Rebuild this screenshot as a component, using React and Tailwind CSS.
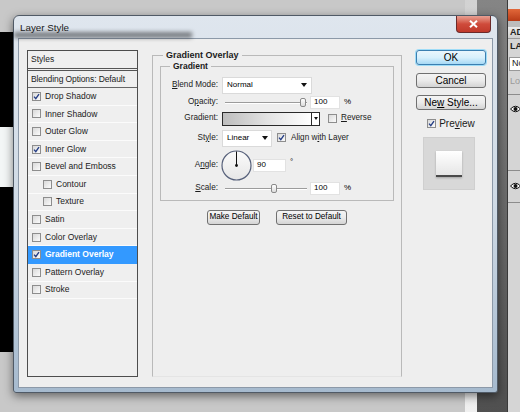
import React from "react";

const font = "font-['Liberation_Sans',Arial,sans-serif]";

const styleItems = [
  { label: "Drop Shadow", checked: true },
  { label: "Inner Shadow" },
  { label: "Outer Glow" },
  { label: "Inner Glow", checked: true },
  { label: "Bevel and Emboss" },
  { label: "Contour", sub: true },
  { label: "Texture", sub: true },
  { label: "Satin" },
  { label: "Color Overlay" },
  { label: "Gradient Overlay", checked: true, active: true },
  { label: "Pattern Overlay" },
  { label: "Stroke" },
];

function Check({ checked }) {
  return (
    <span className="flex h-[9px] w-[9px] shrink-0 items-center justify-center border border-[#8d8d8d] bg-linear-to-br from-[#d9d9d9] to-[#fbfbfb]">
      {checked && (
        <svg width="7" height="7" viewBox="0 0 7 7">
          <path d="M1 3.6 L2.8 5.6 L6 1.2" fill="none" stroke="#263f86" strokeWidth="1.4" />
        </svg>
      )}
    </span>
  );
}

function WinButton({ children, primary, className = "" }) {
  const skin = primary
    ? "border-[#3c7fb1] bg-linear-to-b from-[#eaf6fd] via-[#d9f0fc] to-[#a7d9f5] shadow-[0_0_0_1px_#9fdcf7]"
    : "border-[#707070] bg-linear-to-b from-[#f4f4f4] via-[#ebebeb] to-[#d4d4d4]";
  return (
    <div
      className={`flex items-center justify-center rounded-[3px] border text-black ${skin} ${className}`}
    >
      <span>{children}</span>
    </div>
  );
}

function Slider({ at }) {
  return (
    <div className="relative h-[11px] w-[82px]">
      <div className="absolute left-0 right-0 top-[5px] h-[2px] border-t border-[#9c9c9c] border-b border-b-white" />
      <div
        className="absolute top-[1px] h-[9px] w-[6px] rounded-[2px] border border-[#8a8a8a] bg-linear-to-b from-white to-[#dcdcdc]"
        style={{ left: at }}
      />
    </div>
  );
}

function NumBox({ value, className = "w-[30px]" }) {
  return (
    <div className={`flex h-[13px] items-center border border-[#e2e2e2] bg-white pl-[3px] text-[8px] text-black ${className}`}>
      {value}
    </div>
  );
}

function Arrow() {
  return (
    <svg width="6" height="4" viewBox="0 0 6 4">
      <path d="M0 0 H6 L3 4 Z" fill="#111" />
    </svg>
  );
}

function Row({ label, h, children }) {
  return (
    <div className="flex items-center gap-[4px]" style={{ height: h }}>
      <div className="w-[57px] shrink-0 text-right text-[8.2px] text-[#1b1b1b]">{label}</div>
      <div className="flex items-center">{children}</div>
    </div>
  );
}

function StylesList() {
  return (
    <div className="flex w-[111px] flex-col border border-[#4d4d4d] bg-[#efefef] text-[8.5px] text-[#1b1b1b]">
      <div className="flex h-[17px] items-center pl-[3px]">Styles</div>
      <div className="border-b-[3px] border-double border-[#555]" />
      <div className="flex h-[17px] items-center border-b border-[#666] pl-[3px] tracking-[-0.1px]">Blending Options: Default</div>
      {styleItems.map((it) => (
        <div
          key={it.label}
          className={`flex h-[17.6px] items-center gap-[4px] border-b ${
            it.active ? "border-[#3399ff] bg-[#3399ff] font-bold text-white" : "border-[#fbfbfb]"
          } ${it.sub ? "pl-[15px]" : "pl-[4px]"}`}
        >
          <Check checked={it.checked} />
          <span>{it.label}</span>
        </div>
      ))}
    </div>
  );
}

function GradientPanel() {
  return (
    <fieldset className="ml-[14px] flex w-[248px] flex-col border border-[#b9b9b9] border-b-[#e4e4e4] px-[7px]">
      <legend className="ml-[3px] px-[3px] text-[9px] font-bold leading-[11px] text-[#1b1b1b]">Gradient Overlay</legend>

      <fieldset className="w-[234px] border border-[#b9b9b9] pb-[5px]">
        <legend className="ml-[9px] px-[3px] text-[8.5px] font-bold leading-[11px] text-[#1b1b1b]">Gradient</legend>

        <div className="mt-[4px] flex flex-col">
          <Row label={<><u>B</u>lend Mode:</>} h={18}>
            <div className="flex h-[17px] w-[90px] items-center justify-between border border-[#dadada] bg-white pl-[4px] pr-[4px] text-[8px] text-black">
              Normal
              <Arrow />
            </div>
          </Row>
          <Row label={<>O<u>p</u>acity:</>} h={16}>
            <div className="ml-[3px]">
              <Slider at={75} />
            </div>
            <NumBox value="100" className="ml-[3px] w-[30px]" />
            <span className="ml-[4px] text-[8px]">%</span>
          </Row>
          <Row label="Gradient:" h={17}>
            <div className="flex h-[14px] w-[98px] border border-[#2a2a2a]">
              <div className="flex-1 bg-linear-to-r from-[#bdbdbd] via-[#e3e3e3] to-white" />
              <div className="flex w-[8px] items-center justify-center border-l border-[#2a2a2a] bg-white">
                <svg width="4" height="3" viewBox="0 0 4 3">
                  <path d="M0 0 H4 L2 3 Z" fill="#111" />
                </svg>
              </div>
            </div>
            <div className="ml-[8px] flex items-center gap-[4px] text-[8.2px] text-[#1b1b1b]">
              <Check />
              <span><u>R</u>everse</span>
            </div>
          </Row>
          <Row label={<>St<u>y</u>le:</>} h={22}>
            <div className="flex h-[17px] w-[50px] items-center justify-between border border-[#dadada] bg-white pl-[4px] pr-[3px] text-[8px] text-black">
              Linear
              <Arrow />
            </div>
            <div className="ml-[5px] flex items-center gap-[5px] text-[8.2px] text-[#1b1b1b]">
              <Check checked />
              <span>Align w<u>i</u>th Layer</span>
            </div>
          </Row>
          <Row label={<>A<u>n</u>gle:</>} h={32}>
            <svg width="31" height="31" viewBox="0 0 31 31" className="-ml-[1px]">
              <defs>
                <linearGradient id="dial" x1="0" y1="0" x2="0" y2="1">
                  <stop offset="0" stopColor="#fbfbfb" />
                  <stop offset="1" stopColor="#e6e6e6" />
                </linearGradient>
              </defs>
              <circle cx="15.5" cy="15.5" r="14.5" fill="url(#dial)" stroke="#56607a" strokeWidth="1.2" />
              <line x1="15.5" y1="15.5" x2="15.5" y2="1.5" stroke="#111" strokeWidth="1" />
              <circle cx="15.5" cy="15.5" r="1.4" fill="#111" />
            </svg>
            <NumBox value="90" className="ml-[1px] w-[33px]" />
            <span className="ml-[4px] -mt-[7px] text-[8px]">°</span>
          </Row>
          <Row label={<><u>S</u>cale:</>} h={14}>
            <div className="ml-[3px]">
              <Slider at={46} />
            </div>
            <NumBox value="100" className="ml-[3px] w-[30px]" />
            <span className="ml-[4px] text-[8px]">%</span>
          </Row>
        </div>
      </fieldset>

      <div className="mt-[9px] flex justify-center gap-[16px] text-[8.2px]">
        <WinButton className="h-[15px] w-[53px]">Make Default</WinButton>
        <WinButton className="h-[15px] w-[71px]">Reset to Default</WinButton>
      </div>
    </fieldset>
  );
}

function SideButtons() {
  return (
    <div className="ml-[14px] flex w-[70px] flex-col items-center text-[10px]">
      <WinButton primary className="h-[15px] w-full">OK</WinButton>
      <WinButton className="mt-[8px] h-[15px] w-full">Cancel</WinButton>
      <WinButton className="mt-[7px] h-[15px] w-full">
        Ne<u>w</u> Style...
      </WinButton>
      <div className="mt-[6px] flex items-center gap-[3px] text-[#1b1b1b]">
        <Check checked />
        <span>Pre<u>v</u>iew</span>
      </div>
      <div className="mt-[6px] mr-[4px] flex h-[53px] w-[52px] items-center justify-center border border-[#cfcfcf] bg-[#d8d8d8]">
        <div className="h-[26px] w-[26px] border-b-2 border-[#4a4a4a] bg-linear-to-b from-white to-[#e6e6e6] shadow-[0_1px_2px_rgba(0,0,0,0.25)]" />
      </div>
    </div>
  );
}

function LayersPanel() {
  return (
    <div className="absolute left-[507px] top-0 flex h-full w-[60px] flex-col border-l border-[#3a3a3a] bg-[#d5d5d5] text-[9px] text-[#222]">
      <div className="h-[9px] bg-[#e0e0e0]" />
      <div className="h-[12px] bg-linear-to-b from-[#e2683a] to-[#b83a16]" />
      <div className="h-[6px] bg-[#bdbdbd]" />
      <div className="flex h-[12px] items-center border-b border-[#9a9a9a] bg-linear-to-b from-[#ececec] to-[#d0d0d0] pl-[2px] font-bold">ADJ</div>
      <div className="flex h-[14px] items-end pl-[2px] font-bold">LAYERS</div>
      <div className="mt-[4px] ml-[1px] flex h-[14px] items-center border border-[#999] bg-white pl-[2px]">Normal</div>
      <div className="mt-[4px] pl-[2px] text-[#9a9a9a]">Lock</div>
      <div className="mt-[5px] border-b border-[#8c8c8c]" />
      <div className="flex h-[76px] items-start border-b border-[#8c8c8c] pl-[2px] pt-[10px]">
        <svg width="11" height="8" viewBox="0 0 11 8">
          <path d="M0.5 4 Q5.5 -1.5 10.5 4 Q5.5 9.5 0.5 4 Z" fill="#fff" stroke="#111" />
          <circle cx="5.5" cy="4" r="2" fill="#111" />
        </svg>
      </div>
      <div className="flex h-[32px] items-start border-b border-[#8c8c8c] pl-[2px] pt-[11px]">
        <svg width="11" height="8" viewBox="0 0 11 8">
          <path d="M0.5 4 Q5.5 -1.5 10.5 4 Q5.5 9.5 0.5 4 Z" fill="#fff" stroke="#111" />
          <circle cx="5.5" cy="4" r="2" fill="#111" />
        </svg>
      </div>
    </div>
  );
}

export default function App() {
  return (
    <div className={`relative h-[412px] w-[520px] overflow-hidden bg-[#c8c8c8] ${font}`}>
      {/* desktop behind the dialog */}
      <div className="absolute left-0 top-[32px] h-[95px] w-[190px] bg-black" />
      <div className="absolute left-0 top-[127px] h-[60px] w-[20px] bg-[#f3f6f6]" />
      <div className="absolute left-0 top-[187px] h-[165px] w-[20px] bg-black" />
      <div className="absolute left-[465px] top-0 h-full w-[12px] bg-linear-to-b from-[#d2d2d2] to-[#f0f0f0]" />
      <div className="absolute left-[477px] top-0 h-full w-[30px] bg-linear-to-b from-[#858585] to-[#505050]" />
      <LayersPanel />

      {/* Layer Style window */}
      <div className="absolute left-[13px] top-[15px] flex h-[378px] w-[485px] flex-col rounded-t-[6px] rounded-b-[3px] border border-[#505a66] bg-linear-to-b from-[#dfe6ee] via-[#cfdae5] to-[#a6bace] px-[4px] pb-[4px] shadow-[0_3px_10px_rgba(0,0,0,0.5)]">
        <div className="relative flex h-[22px] shrink-0 items-start justify-between">
          <div className="absolute bottom-0 left-[-4px] h-[6px] w-[178px] bg-black/45 blur-[2px]" />
          <span className="relative mt-[5px] pl-[2px] text-[9.8px] text-[#1a1a1a]">Layer Style</span>
          <div className="relative mr-[2px] flex h-[17px] w-[35px] items-center justify-center rounded-b-[4px] border border-t-0 border-[#6b2a2a] bg-linear-to-b from-[#e8a093] via-[#cf4b3b] to-[#c0392b]">
            <svg width="9" height="8" viewBox="0 0 9 8">
              <path d="M1 0.8 L8 7.2 M8 0.8 L1 7.2" stroke="#fff" strokeWidth="2" />
            </svg>
          </div>
        </div>

        <div className="flex flex-1 border border-[#8c99a8] bg-[#eeeeee] pb-[10px] pl-[8px] pt-[11px]">
          <StylesList />
          <GradientPanel />
          <SideButtons />
        </div>
      </div>
    </div>
  );
}
